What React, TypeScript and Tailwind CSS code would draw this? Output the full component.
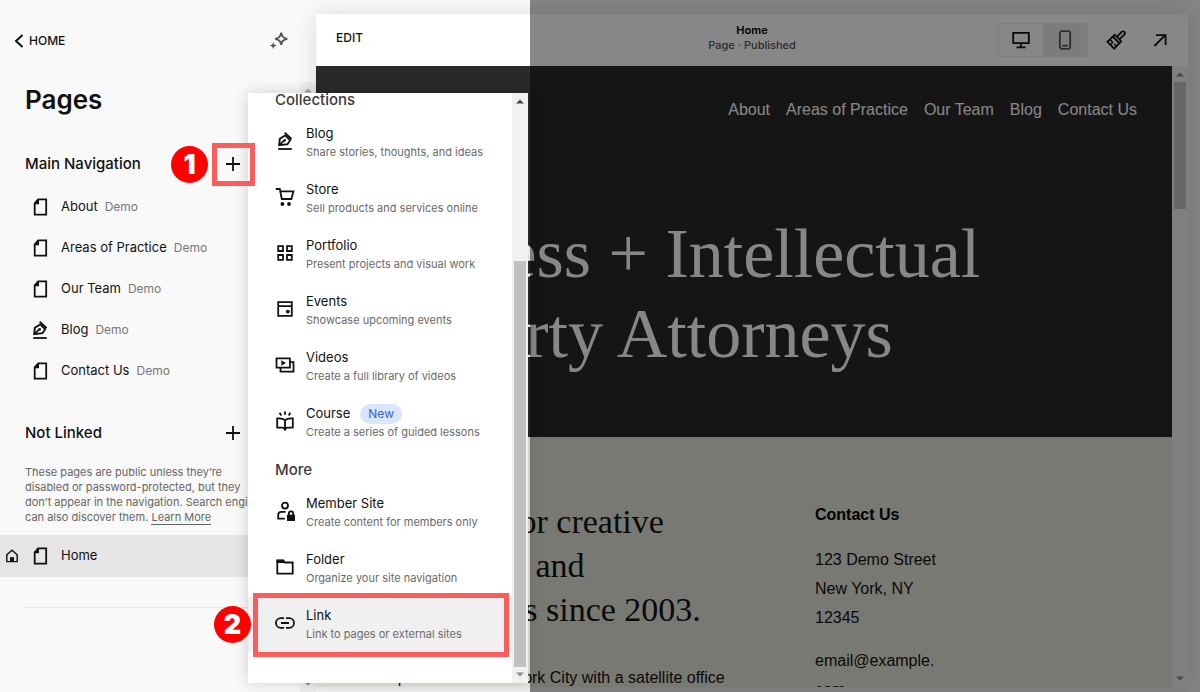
import type { ReactNode } from "react";

interface IconProps {
  children: ReactNode;
  className?: string;
}

function Icon({ children, className = "size-5" }: IconProps) {
  return (
    <svg
      viewBox="0 0 20 20"
      className={`shrink-0 ${className}`}
      fill="none"
      stroke="currentColor"
      strokeWidth="1.8"
      aria-hidden
    >
      {children}
    </svg>
  );
}

const PageIcon = () => (
  <Icon>
    <path d="M8.2 2.3h8v15.4H4.700V6.300z" />
    <path d="M9 2v5.200H4z" fill="currentColor" stroke="none" />
  </Icon>
);

const PenIcon = () => (
  <Icon>
    <path d="M3.200 18h13.600" />
    <path d="M4.200 14.200l.6-6.400 5.400-3.400 5 4.800-2.700 4z" strokeWidth="1.900" />
    <path d="M9.600 1.600l7 6.400M4.200 14.200l5.400-5" />
    <circle cx="9.800" cy="9.200" r="1.200" fill="currentColor" stroke="none" />
  </Icon>
);

const CartIcon = () => (
  <Icon>
    <path d="M.8 2h4l2 10h9.600l2-7.600H5.400" />
    <circle cx="7.400" cy="17" r="1.900" fill="currentColor" stroke="none" />
    <circle cx="14" cy="17" r="1.900" fill="currentColor" stroke="none" />
  </Icon>
);

const GridIcon = () => (
  <Icon>
    <path d="M3.200 3.200h4.800v4.800H3.200zM12 3.200h4.800v4.800H12zM3.200 12h4.800v4.800H3.200zM12 12h4.800v4.800H12z" />
  </Icon>
);

const CalendarIcon = () => (
  <Icon>
    <path d="M3.200 3.200h13.600v13.600H3.200zM3.200 7.200h13.600" />
    <circle cx="12.800" cy="12.600" r="1.900" fill="currentColor" stroke="none" />
  </Icon>
);

const VideoIcon = () => (
  <Icon>
    <path d="M1.500 3.300h13.400v9.400H1.500zM5.500 13v3.700h13V7.200H15" />
    <path d="M6.300 5.200v5.600L11 8z" fill="currentColor" stroke="none" />
  </Icon>
);

const CourseIcon = () => (
  <Icon>
    <path d="M10 9.200C8.300 7.500 5 7.200 2.200 7.400v9.200h5.400c1 0 1.800.5 2.400 1.300.6-.8 1.400-1.300 2.400-1.300h5.400V7.400c-2.800-.2-6.100.1-7.800 1.800zM10 9v9.500" />
    <path d="M10 .6v3.200M4.600 1.800l1.700 2.600M15.400 1.800l-1.700 2.600" />
    <path d="M7.700 17.500h4.600L10 19.900z" fill="currentColor" stroke="none" />
  </Icon>
);

const MemberIcon = () => (
  <Icon>
    <circle cx="10" cy="4.600" r="3" />
    <path d="M10.600 10.800H6.500c-2 0-3.300 1.400-3.300 3.200v3.700h6.600" />
    <path d="M12 13.700h8V20h-8z" fill="currentColor" stroke="none" />
    <path d="M13.900 14v-1.600c0-2.600 4.200-2.600 4.200 0V14" />
  </Icon>
);

const FolderIcon = () => (
  <Icon>
    <path d="M2.300 3.500h6l1.500 2h7.900v11.200H2.300z" />
    <path d="M1.500 2.700h7l1.800 3.200H1.500z" fill="currentColor" stroke="none" />
  </Icon>
);

const LinkIcon = () => (
  <Icon>
    <path d="M9 5.200H5.800a4.800 4.800 0 0 0 0 9.600H9M11 5.200h3.200a4.800 4.800 0 0 1 0 9.600H11M6 10h8" />
  </Icon>
);

const PlusIcon = () => (
  <Icon>
    <path d="M10 3v14M3 10h14" />
  </Icon>
);

const mainPages = [
  { name: "About", icon: <PageIcon /> },
  { name: "Areas of Practice", icon: <PageIcon /> },
  { name: "Our Team", icon: <PageIcon /> },
  { name: "Blog", icon: <PenIcon /> },
  { name: "Contact Us", icon: <PageIcon /> },
];

const collections = [
  { name: "Blog", text: "Share stories, thoughts, and ideas", icon: <PenIcon /> },
  { name: "Store", text: "Sell products and services online", icon: <CartIcon /> },
  { name: "Portfolio", text: "Present projects and visual work", icon: <GridIcon /> },
  { name: "Events", text: "Showcase upcoming events", icon: <CalendarIcon /> },
  { name: "Videos", text: "Create a full library of videos", icon: <VideoIcon /> },
  {
    name: "Course",
    text: "Create a series of guided lessons",
    icon: <CourseIcon />,
    badge: "New",
  },
];

const more = [
  { name: "Member Site", text: "Create content for members only", icon: <MemberIcon /> },
  { name: "Folder", text: "Organize your site navigation", icon: <FolderIcon /> },
  { name: "Link", text: "Link to pages or external sites", icon: <LinkIcon />, active: true },
];

const siteLinks = ["About", "Areas of Practice", "Our Team", "Blog", "Contact Us"];

interface MenuItemProps {
  name: string;
  text: string;
  icon: ReactNode;
  badge?: string;
  active?: boolean;
}

function MenuItem({ name, text, icon, badge, active }: MenuItemProps) {
  return (
    <li>
      <button
        type="button"
        className={`flex h-14 w-full gap-[11px] pt-[10px] pl-[27px] text-left ${
          active ? "bg-[#f0f0f0]" : ""
        }`}
      >
        <span className="pt-1.5">{icon}</span>
        <span className="block">
          <span className="flex h-[18px] items-center text-[13px]">
            {name}
            {badge && (
              <span className="ml-[10px] rounded-full bg-[#d7e6fd] px-2 py-0.5 text-xs leading-4 text-[#3f62b8]">
                {badge}
              </span>
            )}
          </span>
          <span className="block text-[11px] leading-[18px] whitespace-nowrap text-[#6a6a6a]">
            {text}
          </span>
        </span>
      </button>
    </li>
  );
}

/** Floating list of page types, scrolled down to its last entries. */
function AddPageMenu() {
  return (
    <div className="absolute top-[93px] bottom-[9px] left-[248px] flex w-[280px] bg-white shadow-[0_0_14px_rgba(0,0,0,0.18)]">
      <div className="flex-1 overflow-hidden">
        <h3 className="mb-2 pl-[27px] text-[15px] leading-[14px] font-medium text-[#3b3b3b]">
          Collections
        </h3>
        <ul>
          {collections.map((item) => (
            <MenuItem key={item.name} {...item} />
          ))}
        </ul>
        <h3 className="pt-[10px] pb-1.5 pl-[27px] text-[15px] leading-[18px] font-medium text-[#3b3b3b]">
          More
        </h3>
        <ul>
          {more.map((item) => (
            <MenuItem key={item.name} {...item} />
          ))}
        </ul>
      </div>
      <Scrollbar arrow="text-[#444]" spaceBefore="h-[152px]" thumb="flex-1" />
    </div>
  );
}

interface ScrollbarProps {
  arrow: string;
  spaceBefore: string;
  thumb: string;
}

function Scrollbar({ arrow, spaceBefore, thumb }: ScrollbarProps) {
  return (
    <div className="flex w-4 shrink-0 flex-col bg-[#f1f1f1]" aria-hidden>
      <svg viewBox="0 0 16 16" className={`size-4 shrink-0 ${arrow}`} fill="currentColor">
        <path d="M4 10.500h8L8 6.500z" />
      </svg>
      <div className={`shrink-0 ${spaceBefore}`} />
      <div className={`mx-0.5 bg-[#c1c1c1] ${thumb}`} />
      <svg
        viewBox="0 0 16 16"
        className="mt-auto size-4 shrink-0 text-[#8a8a8a]"
        fill="currentColor"
      >
        <path d="M4 5.500h8l-4 4z" />
      </svg>
    </div>
  );
}

function SectionHeader({ title }: { title: string }) {
  return (
    <div className="flex h-10 items-center justify-between pr-[47px] pl-[25px]">
      <h2 className="text-[15px] font-medium">{title}</h2>
      <button
        type="button"
        aria-label={`Add page to ${title}`}
        className="flex size-10 items-center justify-center"
      >
        <PlusIcon />
      </button>
    </div>
  );
}

function Sidebar() {
  return (
    <aside className="flex w-[316px] shrink-0 flex-col overflow-hidden text-[#111]">
      <div className="flex h-[82px] shrink-0 items-center justify-between pr-[27px] pl-[13px]">
        <a href="#home" className="flex items-center gap-1 text-xs font-medium">
          <svg
            viewBox="0 0 12 16"
            className="h-4 w-3"
            fill="none"
            stroke="currentColor"
            strokeWidth="2"
            aria-hidden
          >
            <path d="M9.500 2L3 8l6.500 6" />
          </svg>
          HOME
        </a>
        <button type="button" aria-label="Assistant" className="text-[#555]">
          <Icon>
            <path d="M12.200 1.800c.8 3.800 1.900 5 6 6-4.100 1-5.200 2.200-6 6-.8-3.800-1.900-5-6-6 4.100-1 5.200-2.200 6-6z" />
            <path
              d="M4.200 11c.5 2.200 1.300 3 3.600 3.600-2.300.6-3.100 1.400-3.600 3.600-.5-2.200-1.300-3-3.600-3.600 2.300-.6 3.100-1.400 3.600-3.600z"
              fill="currentColor"
              stroke="none"
            />
          </Icon>
        </button>
      </div>

      <div className="flex min-h-0 flex-1">
        <div className="min-w-0 flex-1 overflow-hidden">
          <h1 className="pl-[25px] text-[26px] leading-9 font-semibold">Pages</h1>

          <div className="pt-[26px]">
            <SectionHeader title="Main Navigation" />
            <ul className="pt-0.5">
              {mainPages.map((page) => (
                <li key={page.name} className="flex h-[41px] items-center pl-[30px]">
                  {page.icon}
                  <span className="ml-[11px] text-[13px]">{page.name}</span>
                  <span className="ml-[7px] text-xs text-[#777]">Demo</span>
                </li>
              ))}
            </ul>
          </div>

          <div className="pt-[22px]">
            <SectionHeader title="Not Linked" />
            <p className="pt-3 pr-8 pb-2.5 pl-[25px] text-[11px] leading-[15px] text-[#666]">
              These pages are public unless they’re disabled or password-protected, but they don’t
              appear in the navigation. Search engines can also discover them.{" "}
              <a href="#learn" className="border-b border-[#666]">
                Learn More
              </a>
            </p>
            <div className="flex h-[42px] items-center bg-[#e5e5e5] pl-1">
              <Icon className="mr-2.5 size-4">
                <path d="M3.500 17V8.500L10 2.800l6.500 5.700V17z" />
                <path d="M7.500 17v-5.500h5V17z" fill="currentColor" stroke="none" />
              </Icon>
              <PageIcon />
              <span className="ml-[11px] text-[13px]">Home</span>
            </div>
          </div>
          <hr className="mt-[30px] ml-[25px] border-[#e6e6e6]" />
        </div>
        <Scrollbar arrow="text-[#aaa]" spaceBefore="h-0" thumb="h-96" />
      </div>
    </aside>
  );
}

function PreviewToolbar() {
  return (
    <header className="grid h-[52px] shrink-0 grid-cols-[1fr_auto_1fr] items-center bg-white">
      <div className="pb-1 pl-5">
        <button type="button" className="block text-xs font-medium text-[#111]">
          EDIT
        </button>
      </div>
      <div className="pb-1 text-center text-[11px] leading-[15px] font-medium">
        <p className="font-semibold text-black">Home</p>
        <p className="text-[#555]">Page · Published</p>
      </div>
      <div className="flex items-center justify-end pr-1.5">
        <div className="mr-1.5 flex border border-[#eee] bg-[#eaeaea]">
          <button
            type="button"
            aria-label="Desktop view"
            className="flex h-8 w-11 items-center justify-center bg-white"
          >
            <Icon>
              <path d="M2.200 2.900h15.600v10.300H2.200zM10 13.500v4M5.500 17.300h9" />
            </Icon>
          </button>
          <button
            type="button"
            aria-label="Mobile view"
            className="flex h-8 w-11 items-center justify-center text-[#555]"
          >
            <Icon>
              <rect x="4.800" y="1.200" width="10.400" height="17.600" rx="2" />
              <path d="M7.300 15.700h5.400" />
            </Icon>
          </button>
        </div>
        <button
          type="button"
          aria-label="Site styles"
          className="flex size-11 items-center justify-center"
        >
          <Icon>
            <path d="M8.800 4.800l6.400 6.400-7 7.400-6.800-6.800zM6.800 6.700l6.500 6.500" />
            <path d="M11 6.800l4.800-5c1.900-1.300 4 .6 2.700 2.600l-5 4.800" />
            <path d="M4 9.700l2.700 2.600M8.200 13.800l2.300 2.400M4.700 14.500l2.200-2.200" strokeWidth="1.500" />
          </Icon>
        </button>
        <button
          type="button"
          aria-label="Open site"
          className="flex size-11 items-center justify-center"
        >
          <Icon>
            <path d="M4.400 16L15 5.400M6 5.100h9.600v10" />
          </Icon>
        </button>
      </div>
    </header>
  );
}

function SitePreview() {
  return (
    <div className="min-w-0 flex-1 overflow-hidden font-['Liberation_Sans',sans-serif] text-base">
      <section className="h-[371px] bg-[#2a2829] pr-[35px] pl-[26px] text-white">
        <nav className="flex justify-end gap-4 pt-8">
          {siteLinks.map((label) => (
            <a key={label} href="#site">
              {label}
            </a>
          ))}
        </nav>
        <h2 className="pt-[92px] font-['Liberation_Serif',serif] text-[70px] leading-[80px] whitespace-nowrap">
          <span className="block">Business + Intellectual</span>
          <span className="block pl-5">Property Attorneys</span>
        </h2>
      </section>
      <section className="flex h-full bg-[#e5e5db] pt-[63px] pl-[26px] text-[#111]">
        <div className="w-[473px] shrink-0">
          <h3 className="font-['Liberation_Serif',serif] text-[34px] leading-[44px]">
            Legal firms for creative
            <br />
            entrepreneurs and
            <br />
            big businesses since 2003.
          </h3>
          <p className="pt-[31px] leading-[29px]">
            We are partners in New York City with a satellite office
          </p>
        </div>
        <div className="leading-[29px]">
          <h4 className="mb-4 font-bold text-black">Contact Us</h4>
          <p>123 Demo Street</p>
          <p>New York, NY</p>
          <p>12345</p>
          <p className="pt-3.5">
            email@example.
            <br />
            com
          </p>
        </div>
      </section>
    </div>
  );
}

function StepBadge({ step, className }: { step: number; className: string }) {
  return (
    <span
      className={`absolute flex size-[37px] items-center justify-center rounded-full bg-[#fe0000] text-[27px] leading-none font-black text-white ${className}`}
    >
      {step}
    </span>
  );
}

export default function App() {
  return (
    <div className="relative flex h-screen overflow-hidden bg-[#f9f9f9] font-[Inter,sans-serif] text-[#111]">
      <Sidebar />
      <main className="flex min-w-0 flex-1 flex-col pt-3.5 pr-3 pb-[5px]">
        <div className="flex min-h-0 flex-1 flex-col shadow-[0_0_22px_rgba(0,0,0,0.12)]">
          <PreviewToolbar />
          <div className="flex min-h-0 flex-1">
            <SitePreview />
            <Scrollbar arrow="text-[#8a8a8a]" spaceBefore="h-0" thumb="h-[127px]" />
          </div>
        </div>
      </main>

      <div className="absolute inset-y-0 right-0 left-[530px] bg-black/47" />
      <AddPageMenu />

      <span className="absolute top-[143px] left-[212px] h-[43px] w-[43px] border-[5px] border-[#fb5c5c]" />
      <StepBadge step={1} className="top-[146px] left-[171px]" />
      <span className="absolute top-[593px] left-[253px] h-16 w-64 border-[5px] border-[#fb5c5c]" />
      <StepBadge step={2} className="top-[606px] left-[214px]" />
    </div>
  );
}
